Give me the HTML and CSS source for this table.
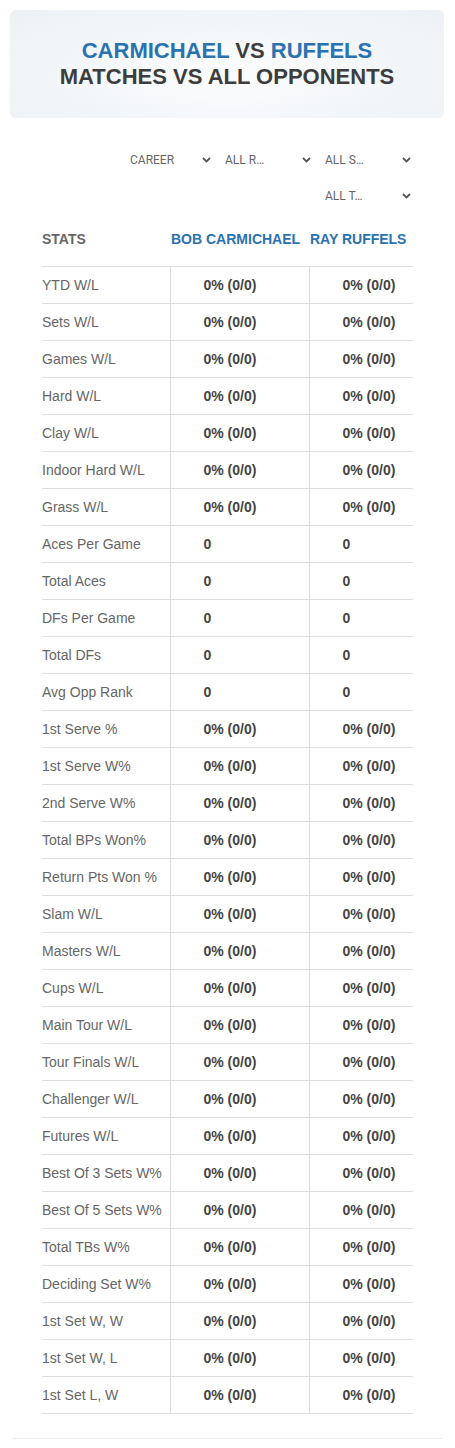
FILE: index.html
```html
<!DOCTYPE html>
<html>
<head>
<meta charset="utf-8">
<link rel="stylesheet" href="styles.css">
</head>
<body>
<div class="hero">
  <div class="title"><span class="blue">CARMICHAEL</span> VS <span class="blue">RUFFELS</span></div>
  <div class="title">MATCHES VS ALL OPPONENTS</div>
</div>
<div class="filters">
  <div class="sel w85"><span>CAREER</span><svg width="9" height="6" viewBox="0 0 9 6"><path d="M1 1l3.5 3.5L8 1" fill="none" stroke="#555" stroke-width="1.8"/></svg></div>
  <div class="sel"><span>ALL R…</span><svg width="9" height="6" viewBox="0 0 9 6"><path d="M1 1l3.5 3.5L8 1" fill="none" stroke="#555" stroke-width="1.8"/></svg></div>
  <div class="sel"><span>ALL S…</span><svg width="9" height="6" viewBox="0 0 9 6"><path d="M1 1l3.5 3.5L8 1" fill="none" stroke="#555" stroke-width="1.8"/></svg></div>
  <div class="sel"><span>ALL T…</span><svg width="9" height="6" viewBox="0 0 9 6"><path d="M1 1l3.5 3.5L8 1" fill="none" stroke="#555" stroke-width="1.8"/></svg></div>
</div>
<table class="stats">
  <colgroup><col class="c1"><col class="c2"><col class="c3"></colgroup>
  <thead>
    <tr><th>STATS</th><th class="blue">BOB CARMICHAEL</th><th class="blue">RAY RUFFELS</th></tr>
  </thead>
  <tbody>
    <tr><td>YTD W/L</td><td>0% (0/0)</td><td>0% (0/0)</td></tr>
    <tr><td>Sets W/L</td><td>0% (0/0)</td><td>0% (0/0)</td></tr>
    <tr><td>Games W/L</td><td>0% (0/0)</td><td>0% (0/0)</td></tr>
    <tr><td>Hard W/L</td><td>0% (0/0)</td><td>0% (0/0)</td></tr>
    <tr><td>Clay W/L</td><td>0% (0/0)</td><td>0% (0/0)</td></tr>
    <tr><td>Indoor Hard W/L</td><td>0% (0/0)</td><td>0% (0/0)</td></tr>
    <tr><td>Grass W/L</td><td>0% (0/0)</td><td>0% (0/0)</td></tr>
    <tr><td>Aces Per Game</td><td>0</td><td>0</td></tr>
    <tr><td>Total Aces</td><td>0</td><td>0</td></tr>
    <tr><td>DFs Per Game</td><td>0</td><td>0</td></tr>
    <tr><td>Total DFs</td><td>0</td><td>0</td></tr>
    <tr><td>Avg Opp Rank</td><td>0</td><td>0</td></tr>
    <tr><td>1st Serve %</td><td>0% (0/0)</td><td>0% (0/0)</td></tr>
    <tr><td>1st Serve W%</td><td>0% (0/0)</td><td>0% (0/0)</td></tr>
    <tr><td>2nd Serve W%</td><td>0% (0/0)</td><td>0% (0/0)</td></tr>
    <tr><td>Total BPs Won%</td><td>0% (0/0)</td><td>0% (0/0)</td></tr>
    <tr><td>Return Pts Won %</td><td>0% (0/0)</td><td>0% (0/0)</td></tr>
    <tr><td>Slam W/L</td><td>0% (0/0)</td><td>0% (0/0)</td></tr>
    <tr><td>Masters W/L</td><td>0% (0/0)</td><td>0% (0/0)</td></tr>
    <tr><td>Cups W/L</td><td>0% (0/0)</td><td>0% (0/0)</td></tr>
    <tr><td>Main Tour W/L</td><td>0% (0/0)</td><td>0% (0/0)</td></tr>
    <tr><td>Tour Finals W/L</td><td>0% (0/0)</td><td>0% (0/0)</td></tr>
    <tr><td>Challenger W/L</td><td>0% (0/0)</td><td>0% (0/0)</td></tr>
    <tr><td>Futures W/L</td><td>0% (0/0)</td><td>0% (0/0)</td></tr>
    <tr><td>Best Of 3 Sets W%</td><td>0% (0/0)</td><td>0% (0/0)</td></tr>
    <tr><td>Best Of 5 Sets W%</td><td>0% (0/0)</td><td>0% (0/0)</td></tr>
    <tr><td>Total TBs W%</td><td>0% (0/0)</td><td>0% (0/0)</td></tr>
    <tr><td>Deciding Set W%</td><td>0% (0/0)</td><td>0% (0/0)</td></tr>
    <tr><td>1st Set W, W</td><td>0% (0/0)</td><td>0% (0/0)</td></tr>
    <tr><td>1st Set W, L</td><td>0% (0/0)</td><td>0% (0/0)</td></tr>
    <tr><td>1st Set L, W</td><td>0% (0/0)</td><td>0% (0/0)</td></tr>
  </tbody>
</table>
<div class="foot"></div>
</body>
</html>
```
FILE: styles.css
```css
html, body { margin: 0; padding: 0; background: #fff; }
body { font-family: "Liberation Sans", Arial, sans-serif; color: #444; width: 455px; }

.hero {
  margin: 10px 11px 0 10px;
  height: 108px;
  border-radius: 6px;
  background: radial-gradient(ellipse at 50% 60%, #fbfcfd 0%, #f3f6f9 55%, #edf1f5 100%);
  display: flex;
  flex-direction: column;
  justify-content: center;
  align-items: center;
}
.title {
  font-size: 22px;
  font-weight: bold;
  line-height: 26px;
  color: #3d3d3d;
}
.blue { color: #2a72b0; }

.filters {
  margin: 29px 40px 0 42px;
  display: flex;
  flex-wrap: wrap;
  justify-content: flex-end;
  column-gap: 10px;
  row-gap: 10px;
}
.sel {
  width: 90px;
  height: 26px;
  box-sizing: border-box;
  padding-right: 4px;
  display: flex;
  align-items: center;
  justify-content: space-between;
  font-family: Roboto, "Liberation Sans", sans-serif;
  font-size: 12px;
  color: #666;
}
.sel.w85 { width: 85px; }
.sel svg { display: block; }

.stats {
  margin: 5px 0 0 42px;
  width: 371px;
  border-collapse: collapse;
  table-layout: fixed;
}
.c1 { width: 128px; }
.c2 { width: 139px; }
.c3 { width: 104px; }
.stats th {
  height: 49px;
  padding: 0 0 3px 1px;
  text-align: left;
  font-size: 14px;
  font-weight: bold;
  color: #666;
  border-bottom: 1px solid #dedede;
  vertical-align: middle;
  white-space: nowrap;
}
.stats th:first-child { padding-left: 0; }
.stats th.blue { color: #2a72b0; }
.stats td {
  height: 36px;
  padding: 0 0 0 33px;
  font-size: 14px;
  font-weight: bold;
  color: #444;
  border-bottom: 1px solid #dedede;
  border-left: 1px solid #dedede;
  vertical-align: middle;
  white-space: nowrap;
}
.stats td:first-child {
  padding-left: 0;
  font-weight: normal;
  color: #666;
  border-left: none;
}

.foot {
  margin: 24px 12px 0 12px;
  height: 1px;
  background: #eeeeee;
}
```
